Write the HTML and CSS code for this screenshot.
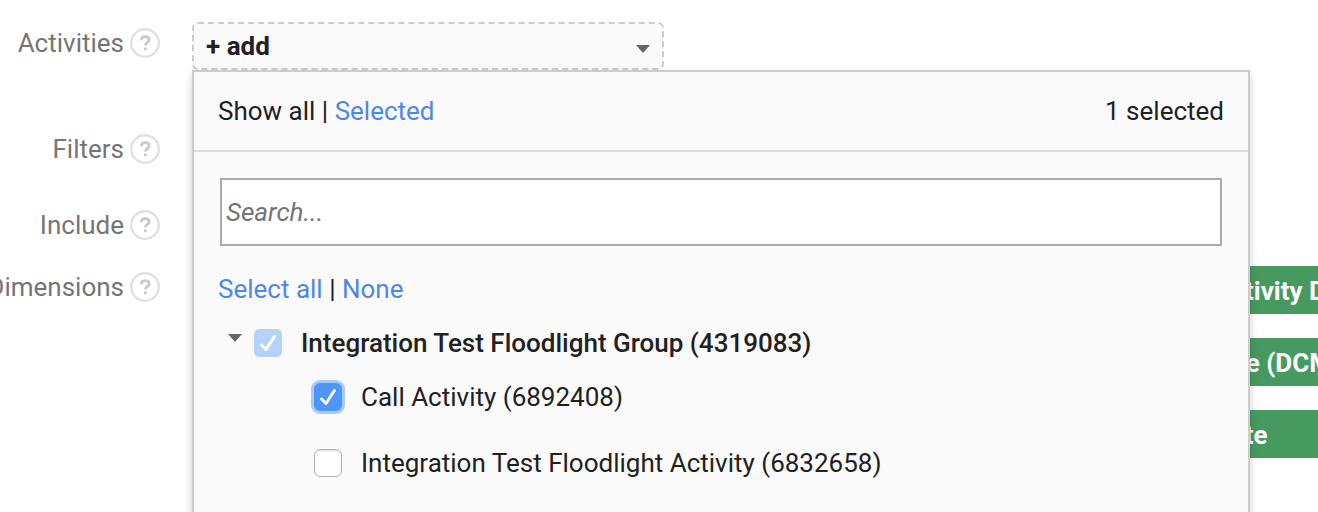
FILE: index.html
```html
<!DOCTYPE html>
<html lang="en">
<head>
<meta charset="utf-8">
<meta name="viewport" content="width=device-width, initial-scale=1">
<title>Activities</title>
<link rel="stylesheet" href="styles.css">
</head>
<body>
<main class="page">
  <section class="row row-activities">
    <div class="label">Activities <button class="help" type="button" aria-label="Help: Activities"><svg class="help-icon" viewBox="0 0 30 30"><circle cx="15" cy="15" r="13.8"/><path d="M11.4 12.2C11.4 9.8 12.9 8.6 15.2 8.6S19.2 9.8 19.2 11.8C19.2 14.4 15.4 14.6 15.4 17.6M15.4 19.6V22.2"/></svg></button></div>
    <div class="field">
      <button class="add" type="button" aria-expanded="true"><span>+ add</span><svg class="arrow" viewBox="0 0 14 8"><path d="M0 0H14L7 8Z"/></svg></button>
      <div class="panel">
        <header class="panel-head">
          <div><span>Show all</span> | <a class="link" href="#selected">Selected</a></div>
          <div>1 selected</div>
        </header>
        <div class="panel-body">
          <input class="search" type="text" placeholder="Search..." aria-label="Search">
          <div class="bulk"><a class="link" href="#all">Select all</a> | <a class="link" href="#none">None</a></div>
          <div class="group">
            <button class="toggle" type="button" aria-label="Collapse group"><svg class="arrow" viewBox="0 0 14 8"><path d="M0 0H14L7 8Z"/></svg></button>
            <label class="option option-group"><span class="check"><input class="box box-partial" type="checkbox" checked><svg class="tick" viewBox="0 0 28 28"><path d="M7.5 16L12 20.5L20.5 7.5"/></svg></span><span>Integration Test Floodlight Group (4319083)</span></label>
          </div>
          <div class="children">
            <label class="option"><span class="check"><input class="box box-active" type="checkbox" checked><svg class="tick" viewBox="0 0 28 28"><path d="M7.5 16L12 20.5L20.5 7.5"/></svg></span><span>Call Activity (6892408)</span></label>
            <label class="option"><span class="check"><input class="box" type="checkbox"></span><span>Integration Test Floodlight Activity (6832658)</span></label>
          </div>
        </div>
      </div>
    </div>
  </section>
  <section class="row row-filters">
    <div class="label">Filters <button class="help" type="button" aria-label="Help: Filters"><svg class="help-icon" viewBox="0 0 30 30"><circle cx="15" cy="15" r="13.8"/><path d="M11.4 12.2C11.4 9.8 12.9 8.6 15.2 8.6S19.2 9.8 19.2 11.8C19.2 14.4 15.4 14.6 15.4 17.6M15.4 19.6V22.2"/></svg></button></div>
  </section>
  <section class="row row-include">
    <div class="label">Include <button class="help" type="button" aria-label="Help: Include"><svg class="help-icon" viewBox="0 0 30 30"><circle cx="15" cy="15" r="13.8"/><path d="M11.4 12.2C11.4 9.8 12.9 8.6 15.2 8.6S19.2 9.8 19.2 11.8C19.2 14.4 15.4 14.6 15.4 17.6M15.4 19.6V22.2"/></svg></button></div>
  </section>
  <section class="row">
    <div class="label">Dimensions <button class="help" type="button" aria-label="Help: Dimensions"><svg class="help-icon" viewBox="0 0 30 30"><circle cx="15" cy="15" r="13.8"/><path d="M11.4 12.2C11.4 9.8 12.9 8.6 15.2 8.6S19.2 9.8 19.2 11.8C19.2 14.4 15.4 14.6 15.4 17.6M15.4 19.6V22.2"/></svg></button></div>
    <div class="chips">
      <div class="chip">Activity D</div>
      <div class="chip">Site (DCM)</div>
      <div class="chip">Date</div>
    </div>
  </section>
</main>
</body>
</html>
```
FILE: styles.css
```css
* {
  box-sizing: border-box;
}

body {
  margin: 0;
  background: #fff;
  color: #212121;
  font: 26px/42px Roboto, "Liberation Sans", sans-serif;
}

.page {
  height: 100vh;
  padding-top: 22px;
  overflow: hidden;
}

.row {
  display: grid;
  grid-template-columns: 160px minmax(0, 1fr);
  column-gap: 32px;
}

.row-activities {
  height: 106px;
}

.row-filters {
  height: 76px;
}

.row-include {
  height: 62px;
}

.label {
  display: flex;
  align-items: center;
  justify-content: flex-end;
  gap: 6px;
  height: 42px;
  color: #757575;
  white-space: nowrap;
}

button {
  padding: 0;
  border: 0;
  background: none;
  color: inherit;
  font: inherit;
  cursor: pointer;
}

.help {
  display: flex;
}

.help-icon {
  width: 30px;
  height: 30px;
  fill: none;
  stroke: #c9c9c9;
  stroke-width: 2.8;
}

.help-icon circle {
  stroke: #e0e0e0;
  stroke-width: 2.4;
}

.field {
  position: relative;
}

.add {
  display: flex;
  align-items: center;
  justify-content: space-between;
  width: 472px;
  max-width: 100%;
  height: 48px;
  padding: 0 12px;
  border: 2px dashed #ccc;
  border-radius: 6px;
  background: #fafafa;
  font-weight: 700;
}

.arrow {
  display: block;
  width: 14px;
  height: 8px;
  fill: #666;
}

.add .arrow {
  margin-top: 6px;
}

.panel {
  position: absolute;
  z-index: 1;
  top: 48px;
  left: 0;
  right: 68px;
  padding-bottom: 48px;
  border: 2px solid #ccc;
  background: #fafafa;
  box-shadow: 0 4px 8px rgba(0, 0, 0, 0.2);
}

.panel-head {
  display: flex;
  align-items: center;
  justify-content: space-between;
  height: 80px;
  padding: 0 24px;
  border-bottom: 2px solid #dcdcdc;
}

.panel-body {
  padding: 26px 24px;
}

.link {
  color: #4f86ec;
  text-decoration: none;
}

.search {
  display: block;
  width: calc(100% - 4px);
  height: 68px;
  margin: 0 2px 22px;
  padding: 0 4px;
  border: 2px solid #aaa;
  border-radius: 0;
  outline: 0;
  background: #fff;
  color: inherit;
  font: inherit;
}

.search::placeholder {
  color: #757575;
  font-style: italic;
  opacity: 1;
}

.bulk {
  margin-bottom: 12px;
}

.group {
  display: flex;
  padding-left: 10px;
}

.toggle {
  display: flex;
  align-self: flex-start;
  width: 26px;
  padding-top: 12px;
}

.option {
  display: flex;
  align-items: center;
  gap: 19px;
}

.option-group {
  font-weight: 500;
}

.check {
  display: grid;
  flex: none;
  width: 28px;
  height: 28px;
}

.box,
.tick {
  grid-area: 1 / 1;
  width: 28px;
  height: 28px;
}

.box {
  margin: 0;
  appearance: none;
  border: 1px solid #b4b4b4;
  border-radius: 6px;
  background: #fff;
  box-shadow: inset 0 1px 2px rgba(0, 0, 0, 0.15);
}

.box-partial {
  border: 0;
  border-radius: 5px;
  background: #b5d3f9;
  box-shadow: none;
}

.box-active {
  border: 0;
  background: #4e96f7;
  box-shadow: 0 0 0 3px #a7cbfb;
}

.tick {
  fill: none;
  stroke: #fff;
  stroke-width: 3;
  stroke-linecap: round;
  stroke-linejoin: round;
  pointer-events: none;
}

.children {
  display: grid;
  gap: 24px;
  padding: 12px 0 0 96px;
}

.chips {
  display: grid;
  gap: 24px;
  margin-left: auto;
  width: 116px;
}

.chip {
  height: 48px;
  padding-left: 12px;
  background: #479a5f;
  color: #fff;
  font-weight: 700;
  line-height: 50px;
  white-space: nowrap;
}
```
